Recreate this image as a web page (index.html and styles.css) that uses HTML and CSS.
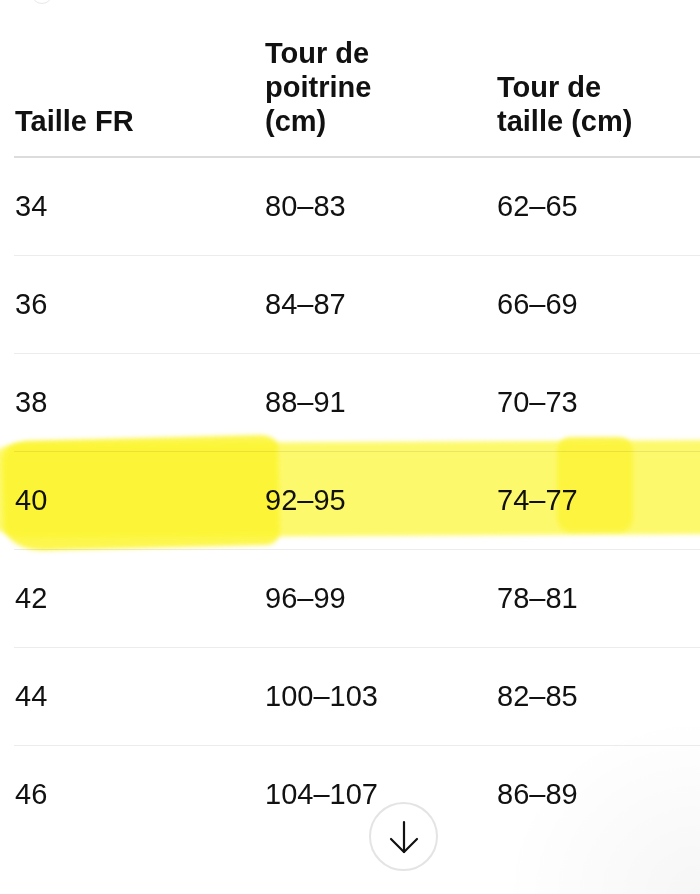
FILE: index.html
```html
<!DOCTYPE html>
<html lang="fr">
<head>
<meta charset="utf-8">
<link rel="stylesheet" href="styles.css">
</head>
<body>
<div class="page">
  <div class="top-arc"></div>
  <table class="sizes">
    <thead>
      <tr>
        <th class="c1">Taille FR</th>
        <th class="c2">Tour de<br>poitrine<br>(cm)</th>
        <th class="c3">Tour de<br>taille (cm)</th>
      </tr>
    </thead>
    <tbody>
      <tr><td>34</td><td>80–83</td><td>62–65</td></tr>
      <tr><td>36</td><td>84–87</td><td>66–69</td></tr>
      <tr><td>38</td><td>88–91</td><td>70–73</td></tr>
      <tr><td>40</td><td>92–95</td><td>74–77</td></tr>
      <tr><td>42</td><td>96–99</td><td>78–81</td></tr>
      <tr><td>44</td><td>100–103</td><td>82–85</td></tr>
      <tr class="last"><td>46</td><td>104–107</td><td>86–89</td></tr>
    </tbody>
  </table>
  <div class="shade"></div>
  <div class="marker">
    <div class="mk mk-band"></div>
    <div class="mk mk-left"></div>
    <div class="mk mk-right"></div>
  </div>
  <button class="scroll-btn" aria-label="Défiler vers le bas">
    <svg width="30" height="34" viewBox="0 0 30 34" fill="none" stroke="#111" stroke-width="2.2" stroke-linecap="round" stroke-linejoin="round">
      <path d="M15 2 V32"/>
      <path d="M2 19 L15 32 L28 19"/>
    </svg>
  </button>
</div>
</body>
</html>
```
FILE: styles.css
```css
html, body {
  margin: 0;
  padding: 0;
  background: #fff;
}
body {
  width: 700px;
  height: 894px;
  overflow: hidden;
  font-family: "Liberation Sans", Arial, sans-serif;
  color: #111;
}
.page {
  position: relative;
  width: 700px;
  height: 894px;
  padding-left: 14px;
  box-sizing: border-box;
  overflow: hidden;
}
.top-arc {
  position: absolute;
  left: 31px;
  top: -18px;
  width: 20px;
  height: 20px;
  border-radius: 50%;
  border: 1px solid #e8e8e8;
}
.sizes {
  border-collapse: collapse;
  width: 760px;
  table-layout: fixed;
  font-size: 29px;
}
.sizes th {
  text-align: left;
  font-weight: bold;
  vertical-align: bottom;
  line-height: 34px;
  padding: 36px 0 18px 1px;
  border-bottom: 2px solid #dcdcdc;
}
.sizes .c1 { width: 249px; }
.sizes .c2 { width: 231px; }
.sizes td {
  height: 97px;
  padding: 0 0 0 1px;
  border-bottom: 1px solid #ececec;
  vertical-align: middle;
  font-weight: normal;
}
.sizes tr.last td {
  border-bottom: none;
}
.shade {
  position: absolute;
  right: 0;
  bottom: 0;
  width: 200px;
  height: 180px;
  background: radial-gradient(ellipse at 100% 100%, rgba(0,0,0,0.035), rgba(0,0,0,0) 70%);
  pointer-events: none;
}
.marker {
  position: absolute;
  inset: 0;
  pointer-events: none;
  mix-blend-mode: multiply;
}
.mk {
  position: absolute;
  filter: blur(2px);
}
.mk-band {
  left: -10px;
  top: 442px;
  width: 730px;
  height: 94px;
  background: #fdf96c;
  border-radius: 30px 10px 10px 40px / 20px 10px 10px 20px;
  transform: rotate(-0.3deg);
}
.mk-left {
  left: 3px;
  top: 438px;
  width: 276px;
  height: 110px;
  background: #fcf52e;
  border-radius: 26px 18px 14px 40px / 20px 12px 14px 26px;
  transform: rotate(-1.4deg);
  opacity: 0.85;
}
.mk-right {
  left: 557px;
  top: 437px;
  width: 76px;
  height: 95px;
  background: #fcf435;
  border-radius: 14px;
  opacity: 0.8;
}
.scroll-btn {
  position: absolute;
  left: 369px;
  top: 802px;
  width: 69px;
  height: 69px;
  border-radius: 50%;
  border: 2px solid #e4e4e4;
  background: #fff;
  padding: 0;
  display: flex;
  align-items: center;
  justify-content: center;
}
```
